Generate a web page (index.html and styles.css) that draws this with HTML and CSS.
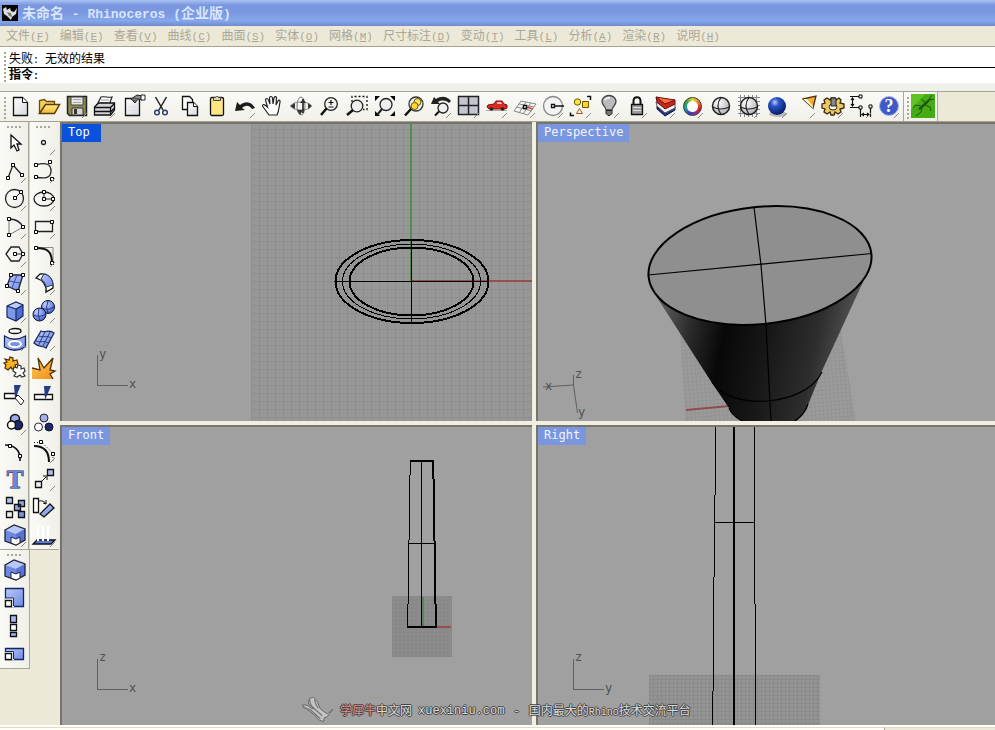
FILE: index.html
```html
<!DOCTYPE html>
<html lang="zh-CN">
<head>
<meta charset="utf-8">
<title>未命名 - Rhinoceros (企业版)</title>
<link rel="stylesheet" href="styles.css">
</head>
<body>
<svg class="defs" aria-hidden="true">
  <defs>
    <linearGradient id="blue" x1="0" y1="0" x2="1" y2="1"><stop offset="0" stop-color="#b9c8f6"/><stop offset="1" stop-color="#6f8be4"/></linearGradient>
    <linearGradient id="paper" x1="0" y1="0" x2="1" y2="1"><stop offset="0" stop-color="#fff"/><stop offset="1" stop-color="#d4d6da"/></linearGradient>
    <linearGradient id="gold" x1="0" y1="0" x2="0" y2="1"><stop offset="0" stop-color="#ffe98a"/><stop offset="1" stop-color="#f2b832"/></linearGradient>
    <linearGradient id="orange" x1="0" y1="0" x2="1" y2="1"><stop offset="0" stop-color="#ffd060"/><stop offset="1" stop-color="#f08a10"/></linearGradient>
    <radialGradient id="ball" cx=".35" cy=".3" r=".8"><stop offset="0" stop-color="#fff"/><stop offset="1" stop-color="#a9abae"/></radialGradient>
    <radialGradient id="blueball" cx=".35" cy=".3" r=".7"><stop offset="0" stop-color="#c9d5ff"/><stop offset="1" stop-color="#4767cf"/></radialGradient>
    <radialGradient id="deepball" cx=".38" cy=".3" r=".75"><stop offset="0" stop-color="#b8d0ff"/><stop offset=".3" stop-color="#2c55c8"/><stop offset="1" stop-color="#04165e"/></radialGradient>
    <linearGradient id="cone" x1="660" y1="340" x2="860" y2="380" gradientUnits="userSpaceOnUse"><stop offset="0" stop-color="#555"/><stop offset=".14" stop-color="#292929"/><stop offset=".3" stop-color="#080808"/><stop offset=".5" stop-color="#161616"/><stop offset=".75" stop-color="#2d2d2d"/><stop offset="1" stop-color="#646464"/></linearGradient>
    <pattern id="grid8" x="251" y="121" width="8" height="8" patternUnits="userSpaceOnUse"><path d="M.5 0V8M0 .5H8" stroke="#8e8e8e" stroke-width="1"/></pattern>
    <pattern id="grid4" x="649" y="675" width="4" height="4" patternUnits="userSpaceOnUse"><path d="M.5 0V4M0 .5H4" stroke="#8a8a8a"/></pattern>
    <pattern id="grid3" x="392" y="596" width="4" height="4" patternUnits="userSpaceOnUse"><path d="M2 2h1v1H2z" fill="#9a9a9a"/></pattern>
    <pattern id="gridp" width="4" height="4" patternUnits="userSpaceOnUse" patternTransform="rotate(-5)"><path d="M.5 0V4M0 .5H4" stroke="#8c8c8c"/></pattern>
    <g id="node"><path d="M-1.500-1.500h3v3h-3z" fill="#fff" stroke="#000"/></g>
    <g id="cutbox"><path d="M2 7l9-5 11 4v11l-9 5-11-4z" fill="#6c89e4"/><path d="M2 7l9-5 11 4-9 5z" fill="#b9c8f6"/><path d="M13 11l9-5v11l-9 5z" fill="#5775d6"/><path d="M2 7l9-5 11 4v11l-9 5-11-4z" fill="none" stroke="#223" stroke-width="1.300"/><path d="M8 14l5 2 4-2v6l-4 2-5-2z" fill="#fff" stroke="#223"/></g>
    <g id="wiresphere"><circle cx="13" cy="12" r="8.500" fill="url(#ball)" stroke="#222" stroke-width="1.500"/><path d="M4.500 13q8 4 17 0M13 3.500q-6 8 0 17" fill="none" stroke="#222" stroke-width="1.200"/></g>
  </defs>
</svg>

<header class="titlebar">
  <svg class="appicon" viewBox="0 0 16 16"><path fill="#050505" d="M0 0h16v16H0z"/><path fill="#ddd" d="M1 4l3-2 1 3 3-2 1 3 3 1 3-4-1 6-4 3-1 3-4-4-3-2z"/><path fill="#777" d="M5 7l4 1 1 4-3-1z"/></svg>
  <h1>未命名<span class="latin"> - Rhinoceros (</span>企业版<span class="latin">)</span></h1>
</header>

<nav class="menubar">
  <button>文件<span>(<u>F</u>)</span></button><button>编辑<span>(<u>E</u>)</span></button><button>查看<span>(<u>V</u>)</span></button><button>曲线<span>(<u>C</u>)</span></button><button>曲面<span>(<u>S</u>)</span></button><button>实体<span>(<u>O</u>)</span></button><button>网格<span>(<u>M</u>)</span></button><button>尺寸标注<span>(<u>D</u>)</span></button><button>变动<span>(<u>T</u>)</span></button><button>工具<span>(<u>L</u>)</span></button><button>分析<span>(<u>A</u>)</span></button><button>渲染<span>(<u>R</u>)</span></button><button>说明<span>(<u>H</u>)</span></button>
</nav>

<section class="command">
  <i class="grip tall"></i>
  <div class="command-lines">
    <output class="history">失败<span>: </span>无效的结果</output>
    <div class="prompt"><label for="cmd">指令<span>:</span></label><input id="cmd" type="text" autocomplete="off"></div>
  </div>
</section>

<div class="toolbar">
  <div class="band">
    <i class="grip tall"></i>
    <button aria-label="New"><svg viewBox="0 0 24 24"><path d="M5.500 3.500h9l5 5v13h-14z" fill="url(#paper)" stroke="#111" stroke-width="1.300"/><path d="M14.500 3.500v5h5" fill="#fff" stroke="#111"/></svg></button>
    <button aria-label="Open"><svg viewBox="0 0 24 24"><path d="M3.500 19.500V6.500l5-1 2 2h8v3" fill="#f3cf5c" stroke="#6b4c0c" stroke-width="1.300"/><path d="M3.500 19.500l6-9h14l-5 9z" fill="url(#gold)" stroke="#5b3c08" stroke-width="1.500"/></svg></button>
    <button class="fly" aria-label="Save"><svg viewBox="0 0 24 24"><path d="M3.500 2.500h19v19h-17l-2-2z" fill="#8c894d" stroke="#222" stroke-width="1.500"/><path d="M7 3h12v8H7z" fill="#e6e6e6" stroke="#444"/><path d="M9 5.500h8M9 8.500h8" stroke="#aaa"/><path d="M8 14h11v7H8z" fill="#d5d5d5" stroke="#333"/><path d="M10 15h3v5h-3z" fill="#333"/></svg></button>
    <button class="fly" aria-label="Print"><svg viewBox="0 0 24 24"><path d="M9 3c4-1 7 1 11 0l-3 8H5z" fill="#fff" stroke="#222" stroke-width="1.200"/><path d="M9 6h8M8 8.500h8" stroke="#999"/><path d="M2.500 13l4-4h16v7l-4 5h-16z" fill="#d2d3d6" stroke="#111" stroke-width="1.300"/><path d="M2.500 13.500h16l4-4M3 17.500h16l3-3M18.500 13v8" fill="none" stroke="#111" stroke-width="1.300"/></svg></button>
    <button aria-label="Properties"><svg viewBox="0 0 24 24"><path d="M5.500 4.500h14v17h-14z" fill="url(#paper)" stroke="#111" stroke-width="1.300"/><path d="M8 13h9M8 16h9" stroke="#ddd"/><path d="M11 5l6-4 5 1v4l-4-1-3 4z" fill="#888" stroke="#222"/><path d="M21 1h4v5h-4z" fill="#fff" stroke="#222"/><path d="M13 4l5 1M12 6l4 1" stroke="#444"/></svg></button>
    <button aria-label="Cut"><svg viewBox="0 0 24 24"><path d="M7.500 3l7.500 13M18.500 3L11 16" stroke="#222" stroke-width="1.500"/><circle cx="9" cy="18.500" r="2.300" fill="none" stroke="#2c3f6c" stroke-width="1.500"/><circle cx="17" cy="18.500" r="2.300" fill="none" stroke="#2c3f6c" stroke-width="1.500"/></svg></button>
    <button aria-label="Copy"><svg viewBox="0 0 24 24"><path d="M6.500 2.500h7l3 3v10h-10z" fill="#fff" stroke="#111" stroke-width="1.300"/><path d="M11.500 8.500h6l4 4v9h-10z" fill="url(#paper)" stroke="#111" stroke-width="1.300"/><path d="M17.500 8.500v4h4" fill="#fff" stroke="#111"/></svg></button>
    <button aria-label="Paste"><svg viewBox="0 0 24 24"><rect x="6.500" y="3.500" width="13" height="18" rx="1.500" fill="#ffe682" stroke="#111" stroke-width="1.300"/><path d="M9.500 6.500v-3h2l1-1h1l1 1h2v3z" fill="#ded3a2" stroke="#444"/></svg></button>
    <button class="fly" aria-label="Undo"><svg viewBox="0 0 24 24"><path d="M3 17l2-9 3 3c6-5 12-3 15 3l-3 1c-3-4-6-4-10-1l3 2z" fill="#1c1c1c"/></svg></button>
    <button aria-label="Pan"><svg viewBox="0 0 24 24"><path d="M9 21C6 17 4 14 2.500 12c0-2 2-2 5 1L5.500 6c0-2 2-2 3 0l1.500 4-.5-6c0-2 2.500-2 3 0l.5 6 1-6c.5-2 2.500-1.500 2.500 0l-.5 7 2-4c1-1.500 2.500-.5 2 1-1 5-1 9-3 13z" fill="#fff" stroke="#222" stroke-width="1.200"/></svg></button>
    <button aria-label="Rotate view"><svg viewBox="0 0 24 24"><ellipse cx="13" cy="12" rx="10" ry="4" fill="none" stroke="#888"/><ellipse cx="13" cy="12" rx="4" ry="9" fill="none" stroke="#777"/><path d="M15 5v14" stroke="#111" stroke-width="1.500"/><path d="M7 9l-5 3 5 3zM20 9l4 3-4 3zM12 9l3-4 3 4zM9 16h6l-3 5z" fill="#333"/></svg></button>
    <button aria-label="Zoom"><svg viewBox="0 0 24 24"><circle cx="15" cy="10" r="6.300" fill="#f4f4f4" stroke="#222" stroke-width="1.300"/><path d="M10.500 14.500L5 21" stroke="#111" stroke-width="2.500"/><path d="M12.500 8.500h5M15 6v5M12.500 13h5" stroke="#111" stroke-width="1.200"/></svg></button>
    <button aria-label="Zoom window"><svg viewBox="0 0 24 24"><path d="M8 8V2.500h15v13h-4" fill="none" stroke="#111" stroke-dasharray="2 2" stroke-width="1.300"/><circle cx="13" cy="12" r="5.800" fill="#eee" stroke="#222" stroke-width="1.300"/><path d="M9 16l-6 5" stroke="#111" stroke-width="2.500"/></svg></button>
    <button aria-label="Zoom extents"><svg viewBox="0 0 24 24"><path d="M3 2h5L3 7zM23 2h-5l5 5zM3 22h5l-5-5zM23 22h-5l5-5z"/><circle cx="14" cy="10.500" r="6" fill="#eee" stroke="#222" stroke-width="1.300"/><path d="M10 15l-5 6" stroke="#222" stroke-width="2"/></svg></button>
    <button aria-label="Zoom selected"><svg viewBox="0 0 24 24"><circle cx="16" cy="10" r="7" fill="#eee" stroke="#333" stroke-width="1.300"/><circle cx="17.500" cy="8" r="3.500" fill="#ffe04e" stroke="#645418"/><circle cx="14.500" cy="12" r="3.500" fill="#ffd92e" stroke="#645418"/><path d="M11 15l-6 6.500" stroke="#111" stroke-width="2.500"/></svg></button>
    <button class="fly" aria-label="Undo view"><svg viewBox="0 0 24 24"><path d="M3 10l3-7 2 2c6-4 12-2 15 2l-2 2c-4-3-7-3-11-1l2 2z" fill="#222"/><circle cx="15" cy="14" r="5" fill="#eee" stroke="#222" stroke-width="1.300"/><path d="M11 17.500l-4 4" stroke="#111" stroke-width="2"/></svg></button>
    <button class="fly" aria-label="Four viewports"><svg viewBox="0 0 24 24"><path d="M2.500 2.500h20v18h-20z" fill="#c3c5d0" stroke="#222" stroke-width="1.500"/><path d="M12.500 2v19M2 11.500h21" stroke="#222" stroke-width="1.500"/></svg></button>
    <button class="fly" aria-label="Named view"><svg viewBox="0 0 24 24"><path d="M2 16.500h21" stroke="#aaa"/><path d="M3 13l1-2 6-1 2-3h6l2 3 3 1v3l-2 1H5z" fill="#d92b25" stroke="#7d0f0c"/><path d="M13 10V8h4l1 2z" fill="#fbb"/><circle cx="7.500" cy="15" r="1.800" fill="#222"/><circle cx="18.500" cy="15" r="1.800" fill="#222"/></svg></button>
    <button class="fly" aria-label="Set CPlane"><svg viewBox="0 0 24 24"><path d="M9 7l15 3M7 10l15 3M5 13l15 4M2 17l14 4M9 7L2 17M14 8L7 19M19 9l-8 11M24 10l-8 11" stroke="#888" fill="none"/><path d="M14 13l7 2" stroke="#c44" stroke-width="1.500"/><path d="M11.500 11.500h3v3h-3z" fill="#fff" stroke="#111" stroke-width="1.300"/></svg></button>
    <button class="fly" aria-label="Object snap"><svg viewBox="0 0 24 24"><circle cx="13" cy="12" r="9.500" fill="#f3f3f3" stroke="#888" stroke-width="1.300"/><path d="M13 12h11" stroke="#111" stroke-width="1.500"/><path d="M11.500 10.500h3v3h-3z" fill="#fff" stroke="#111" stroke-width="1.300"/></svg></button>
    <button class="fly" aria-label="Select"><svg viewBox="0 0 24 24"><circle cx="9.500" cy="8" r="3.200" fill="#ffe03c" stroke="#6d5600"/><path d="M14.500 7.500h6v6h-6z" fill="#ffd529" stroke="#6d5600"/><path d="M11.500 14.500l3 5h-6z" fill="#fff3e0" stroke="#a05a20"/><path d="M19 2.500h3.500V6M2.500 18.500v3H6" fill="none" stroke="#111" stroke-width="1.500"/></svg></button>
    <button class="fly" aria-label="Hide"><svg viewBox="0 0 24 24"><path d="M10 16c0-3-4-5-4-8.500a7 6 0 0 1 14 0c0 3.500-4 5.500-4 8.500z" fill="#b9bbbe" stroke="#444" stroke-width="1.300"/><path d="M9 6q2-3 5-2" stroke="#fff" fill="none" stroke-width="1.500"/><path d="M10 16.500h6v3l-2 2h-2l-2-2z" fill="#777" stroke="#222"/></svg></button>
    <button class="fly" aria-label="Lock"><svg viewBox="0 0 24 24"><path d="M9.500 11V7c0-5 7-5 7 0v4" fill="none" stroke="#111" stroke-width="2"/><path d="M7.500 10.500h11v10h-11z" fill="#9a9b9d" stroke="#111" stroke-width="1.300"/><path d="M9 13.500h8M9 16.500h8" stroke="#ddd"/></svg></button>
    <button class="fly" aria-label="Layers"><svg viewBox="0 0 24 24"><path d="M5 12l8 6 10-5v3l-10 6-8-7z" fill="#26347e" stroke="#101540"/><path d="M4 8l9 6 10-4v4l-10 5-8-7z" fill="#f5f5f5" stroke="#556"/><path d="M4 3l9 6 10-3v4l-10 5-8-7z" fill="#c8261a" stroke="#611"/><path d="M4 3l19 3-10 4z" fill="#ff6e3a" stroke="#611"/></svg></button>
    <button class="fly" aria-label="Object colour"><i class="wheel"></i></button>
    <button aria-label="Shade"><svg viewBox="0 0 24 24"><use href="#wiresphere"/></svg></button>
    <button class="fly" aria-label="Shade with grid"><svg viewBox="0 0 24 24"><path d="M4.500 1v22M8.500 1v22M12.500 1v22M16.500 1v22M20.500 1v22M2 3.500h22M2 7.500h22M2 11.500h22M2 15.500h22M2 19.500h22" stroke="#888"/><use href="#wiresphere"/></svg></button>
    <button class="fly" aria-label="Render"><svg viewBox="0 0 24 24"><ellipse cx="14" cy="20" rx="9" ry="3" fill="#bbb"/><circle cx="13" cy="12" r="9" fill="url(#deepball)"/></svg></button>
    <button class="fly" aria-label="Spotlight"><svg viewBox="0 0 24 24"><path d="M11 5l13-3-3 12z" fill="url(#orange)" stroke="#4b3410" stroke-width="1.300"/><path d="M11 5l4 0 6 7v2z" fill="#fff1c4"/></svg></button>
    <button class="fly" aria-label="Options"><svg viewBox="0 0 24 24"><path d="M11 4h4l1 2 3-2 2 2-1 3 4 1v4l-4 1 1 3-3 2-3-2-1 3h-3l-1-3-3 2-3-2 1-3-3-1v-4l3-1-1-3 3-2 3 2z" fill="#ecc867" stroke="#38280a" stroke-width="1.300"/><ellipse cx="13" cy="13" rx="4" ry="3" fill="#fff" stroke="#38280a"/><path d="M11 4h5v8h-5z" fill="#888" stroke="#222"/></svg></button>
    <button class="fly" aria-label="Dimensions"><svg viewBox="0 0 24 24"><path d="M2 2.500h9M2 13.500h9M4.500 4v8M3 6l1.500-2L6 6M3 10l1.500 2L6 10M12.500 15v8M22.500 14v9M14 20.500h7M16 19l-2 1.500L16 22M19 19l2 1.500-2 1.500" fill="none" stroke="#111" stroke-width="1.200"/><use href="#node" x="12.500" y="2.500"/><use href="#node" x="12.500" y="13.500"/><use href="#node" x="22.500" y="12.500"/></svg></button>
    <button class="fly" aria-label="Help"><svg viewBox="0 0 24 24"><circle cx="13" cy="12" r="9.500" fill="#3d5ac6" stroke="#a9b7e8"/><text class="qmark" x="13" y="18" text-anchor="middle">?</text></svg></button>
  </div>
  <div class="band plugin">
    <i class="grip tall"></i>
    <button aria-label="Grasshopper"><svg viewBox="0 0 24 24"><path fill="#46ac13" d="M0 0h24v24H0z"/><path fill="#62c224" d="M0 0h14L0 16z"/><path d="M7 15l7-7 5-4 1 1-4 5-7 6z" fill="#1c560f"/><path d="M10 12L4 11l-2 3M14 8l-4-3M14 11l5 2 1 4M11 14l-1 4-5 4M18 5l3-4M19 6l4-1" stroke="#1c560f" fill="none"/></svg></button>
  </div>
</div>

<main class="workspace">
  <aside class="side">
    <div class="palette">
      <i class="grip wide"></i><i class="grip wide"></i>
      <button aria-label="Pointer"><svg viewBox="0 0 24 24"><path d="M8 4v13l3-3 3 6 2-1-2-6h4z" fill="#fff" stroke="#111" stroke-width="1.300"/></svg></button>
      <button class="fly" aria-label="Point"><svg viewBox="0 0 24 24"><circle cx="11.500" cy="11.500" r="2" fill="#fff" stroke="#222" stroke-width="1.300"/></svg></button>
      <button class="fly" aria-label="Polyline"><svg viewBox="0 0 24 24"><path d="M5 19l5-13 9 10" fill="none" stroke="#222" stroke-width="1.300"/><use href="#node" x="5" y="19"/><use href="#node" x="10" y="6"/><use href="#node" x="19" y="16"/></svg></button>
      <button class="fly" aria-label="Curve"><svg viewBox="0 0 24 24"><path d="M4 6c10-3 15-1 15 6s-6 8-15 6" fill="none" stroke="#222" stroke-width="1.300"/><use href="#node" x="4" y="6"/><use href="#node" x="18" y="3"/><use href="#node" x="4" y="18"/><use href="#node" x="20" y="20"/></svg></button>
      <button class="fly" aria-label="Circle"><svg viewBox="0 0 24 24"><circle cx="11.500" cy="11.500" r="9" fill="none" stroke="#222" stroke-width="1.300"/><path d="M12 11l6-6" stroke="#222"/><use href="#node" x="12" y="11"/><use href="#node" x="18" y="5"/></svg></button>
      <button class="fly" aria-label="Ellipse"><svg viewBox="0 0 24 24"><ellipse cx="12" cy="12" rx="10" ry="7" fill="none" stroke="#222" stroke-width="1.300"/><path d="M12 5v7h9" fill="none" stroke="#222"/><use href="#node" x="12" y="5"/><use href="#node" x="12" y="12"/><use href="#node" x="21" y="12"/></svg></button>
      <button class="fly" aria-label="Arc"><svg viewBox="0 0 24 24"><path d="M6 4v16l14-8" fill="none" stroke="#777"/><path d="M6 4q10 0 14 8" fill="none" stroke="#222" stroke-width="1.300"/><use href="#node" x="6" y="4"/><use href="#node" x="20" y="12"/><use href="#node" x="6" y="20"/></svg></button>
      <button class="fly" aria-label="Rectangle"><svg viewBox="0 0 24 24"><path d="M3.500 6.500h17v10h-17z" fill="none" stroke="#222" stroke-width="1.300"/><use href="#node" x="20" y="7"/><use href="#node" x="4" y="17"/></svg></button>
      <button class="fly" aria-label="Polygon"><svg viewBox="0 0 24 24"><path d="M3 11l5-7h8l4 7-4 7H8z" fill="none" stroke="#222" stroke-width="1.300"/><path d="M12 11h8" stroke="#222"/><use href="#node" x="12" y="11"/><use href="#node" x="20" y="11"/></svg></button>
      <button class="fly" aria-label="Fillet"><svg viewBox="0 0 24 24"><path d="M4 4.500h17V20" fill="none" stroke="#888"/><path d="M4 5c11 0 16 3 16 15" fill="none" stroke="#111" stroke-width="2"/><use href="#node" x="4" y="5"/><use href="#node" x="20" y="20"/></svg></button>
      <button class="fly" aria-label="Surface"><svg viewBox="0 0 24 24"><path d="M8 4h12l-5 16-11-5z" fill="url(#blue)" stroke="#223" stroke-width="1.300"/><path d="M6 10l11 2M14 4L9 17" stroke="#314fae"/><use href="#node" x="8" y="4"/><use href="#node" x="20" y="4"/><use href="#node" x="15" y="20"/><use href="#node" x="4" y="15"/></svg></button>
      <button class="fly" aria-label="Revolve"><svg viewBox="0 0 24 24"><path d="M4 7l4-4c7-1 12 3 13 11v3l-7 4c1-6-3-12-10-14z" fill="#fff" stroke="#111" stroke-width="1.300"/><path d="M12 3c5 1 9 5 9 11l-7 2c0-3-2-6-5-8z" fill="url(#blue)" stroke="#26366f"/></svg></button>
      <button class="fly" aria-label="Box"><svg viewBox="0 0 24 24"><path d="M4 7l9-4 7 3v11l-7 5-9-4z" fill="#7d98ea"/><path d="M4 7l9-4 7 3-7 4z" fill="#c0cdf8"/><path d="M13 10l7-4v11l-7 5z" fill="#4d6bd0"/><path d="M4 7l9-4 7 3v11l-7 5-9-4zM4 7l9 3 7-4M13 10v12" fill="none" stroke="#182a66" stroke-width="1.200"/></svg></button>
      <button class="fly" aria-label="Boolean"><svg viewBox="0 0 24 24"><circle cx="16" cy="8" r="6.500" fill="url(#blueball)" stroke="#112"/><circle cx="7.500" cy="15.500" r="6.500" fill="url(#blueball)" stroke="#112"/><path d="M10 9q6 3 12-1M16 2q-3 6 0 12M1 16q7 3 13-1M7 9q-2 6 1 13" fill="none" stroke="#22398d"/></svg></button>
      <button class="fly" aria-label="Project"><svg viewBox="0 0 24 24"><ellipse cx="12" cy="4" rx="6" ry="2.500" fill="#fff" stroke="#111" stroke-width="1.300"/><path d="M1.500 9c6 4 14 4 21 0v11c-7 4-15 4-21 0z" fill="url(#blue)" stroke="#152763" stroke-width="1.300"/><ellipse cx="12" cy="17" rx="6" ry="3" fill="#7b92e4" stroke="#fff" stroke-width="2"/></svg></button>
      <button class="fly" aria-label="Mesh"><svg viewBox="0 0 24 24"><path d="M9 4c5 2 8-2 13 2l-8 15c-4-3-7 0-12-5z" fill="url(#blue)" stroke="#1c2a60" stroke-width="1.300"/><path d="M7 9c5 2 8-1 12 2M4 14c5 2 8-1 12 2M13 5L6 19M18 5l-7 14" fill="none" stroke="#26397e"/></svg></button>
      <button aria-label="Group"><svg viewBox="0 0 24 24"><path d="M2 4l4 1 1-3 3 1v3l4-1 1 4-3 1 1 3-4 1-1-2-3 3-3-2 1-3-2-2 3-1z" fill="#ffb11f" stroke="#432d06" stroke-width="1.200"/><path d="M11 12l3 1 1-3 3 1 0 3 3-1 1 3-2 2 2 3-3 1-2-2-3 2-3-1 2-3-3-2z" fill="#fff" stroke="#333" stroke-width="1.200"/></svg></button>
      <button aria-label="Explode"><svg viewBox="0 0 24 24"><path d="M0 24V13l8 2-2-12 6 10 9-10-3 12 5 1-5 3 3 5z" fill="url(#orange)"/><path d="M0 13l8 2-2-12 6 10 9-10-3 12 5 1-5 3 3 5" fill="none" stroke="#503004" stroke-width="1.300"/></svg></button>
      <button aria-label="Trim"><svg viewBox="0 0 24 24"><path d="M1.500 10.500h12v5h-12z" fill="#fff" stroke="#111" stroke-width="1.300"/><path d="M12 15l3-3 6 6-3 4z" fill="#fff" stroke="#222"/><path d="M11 2h7l-6 14z" fill="#263c88"/></svg></button>
      <button aria-label="Split"><svg viewBox="0 0 24 24"><path d="M2.500 11.500h18v5h-18z" fill="#fff" stroke="#111" stroke-width="1.300"/><path d="M12 3h7l-6 14z" fill="#263c88"/></svg></button>
      <button class="fly" aria-label="Join"><svg viewBox="0 0 24 24"><circle cx="12" cy="8" r="4.500" fill="#9daaeb" stroke="#111" stroke-width="1.500"/><circle cx="15" cy="14" r="4.500" fill="#1c276f" stroke="#111" stroke-width="1.500"/><circle cx="8.500" cy="14" r="4" fill="#fff" stroke="#111" stroke-width="1.500"/></svg></button>
      <button aria-label="Ungroup"><svg viewBox="0 0 24 24"><circle cx="12" cy="7" r="4" fill="#a4afe8" stroke="#223"/><circle cx="6.500" cy="16" r="4" fill="#fff" stroke="#223"/><circle cx="17" cy="16" r="4" fill="#1c276f" stroke="#112"/></svg></button>
      <button aria-label="Point edit"><svg viewBox="0 0 24 24"><path d="M2 6c9 0 16 5 15 16" fill="none" stroke="#111" stroke-width="1.600"/><use href="#node" x="7" y="7"/><use href="#node" x="17" y="17"/></svg></button>
      <button class="fly" aria-label="Control points"><svg viewBox="0 0 24 24"><path d="M2 3.500h8l11 11v7" fill="none" stroke="#111" stroke-dasharray="1 2"/><path d="M2 7c10 0 15 6 15 16" fill="none" stroke="#111" stroke-width="2"/><use href="#node" x="9" y="3"/><use href="#node" x="21" y="15"/></svg></button>
      <button aria-label="Text"><svg viewBox="0 0 24 24"><text class="ticon" x="12" y="21" text-anchor="middle">T</text></svg></button>
      <button class="fly" aria-label="Move"><svg viewBox="0 0 24 24"><path d="M3.500 14.500h6v6h-6z" fill="#eee" stroke="#111" stroke-width="1.300"/><path d="M15.500 2.500h6v6h-6z" fill="#a9b8f2" stroke="#111" stroke-width="1.300"/><path d="M9 15l5-5M11 9h4v4" fill="none" stroke="#111"/></svg></button>
      <button aria-label="Array"><svg viewBox="0 0 24 24"><g stroke="#111" stroke-width="1.300" fill="url(#blue)"><path d="M3.500 2.500h6v6h-6zM15.500 5.500h6v6h-6zM11.500 9.500h6v6h-6zM15.500 16.500h6v6h-6z"/><path d="M3.500 16.500h6v6h-6z" fill="#eee"/></g></svg></button>
      <button aria-label="Rotate"><svg viewBox="0 0 24 24"><path d="M1.500 3.500h5v14h-5z" fill="#fff" stroke="#111" stroke-width="1.300"/><path d="M8 19l10-10 4 4-10 9z" fill="url(#blue)" stroke="#111" stroke-width="1.300"/><path d="M7 6q5-1 7 3M11 8l3 1 0-4" fill="none" stroke="#111"/></svg></button>
      <button class="fly" aria-label="Cap"><svg viewBox="0 0 24 24"><use href="#cutbox"/></svg></button>
      <button class="fly" aria-label="Extrude"><svg viewBox="0 0 24 24"><path d="M5 17h18l-4 4H1z" fill="#5c7ad9" stroke="#111" stroke-width="1.300"/><path d="M6 3v15M11 3v15M16 3v15" stroke="#fff" stroke-width="2"/></svg></button>
    </div>
    <div class="palette narrow">
      <i class="grip wide"></i>
      <button aria-label="Cap holes"><svg viewBox="0 0 24 24"><use href="#cutbox"/></svg></button>
      <button aria-label="Scale"><svg viewBox="0 0 24 24"><path d="M2.500 2.500h18v18h-18z" fill="url(#blue)" stroke="#152763" stroke-width="1.300"/><path d="M2 12h9v9H2z" fill="#fff"/><path d="M10.500 20v-8H2" fill="none" stroke="#152763"/><path d="M2.500 14.500h6v6h-6z" fill="#fff" stroke="#111" stroke-width="1.300"/></svg></button>
      <button aria-label="Align"><svg viewBox="0 0 24 24"><g stroke="#111" stroke-width="1.300" fill="#a9b8f2"><path d="M7.500 1.500h6v7h-6zM7.500 18.500h6v4h-6z"/><path d="M7.500 10.500h6v6h-6z" fill="#fff"/></g></svg></button>
      <button aria-label="Scale 1D"><svg viewBox="0 0 24 24"><path d="M2.500 6.500h18v11h-18z" fill="url(#blue)" stroke="#152763" stroke-width="1.300"/><path d="M2 9h9v9H2z" fill="#fff"/><path d="M10.500 17V9.500H2" fill="none" stroke="#152763"/><path d="M2.500 11.500h6v6h-6z" fill="#fff" stroke="#111" stroke-width="1.300"/></svg></button>
    </div>
  </aside>

  <div class="viewports">
    <section class="view">
      <h2 class="active">Top</h2>
      <svg viewBox="62 124 470 297" preserveAspectRatio="xMidYMid slice" shape-rendering="crispEdges">
        <path d="M251 100h300v340H251" fill="#979797"/><path d="M251 100h300v340H251" fill="url(#grid8)"/>
        <path d="M411 100v181" stroke="#4e914e" stroke-width="2"/><path d="M411 281h140" stroke="#954f4f" stroke-width="2"/>
        <g fill="none" stroke="#000"><ellipse cx="412" cy="281.500" rx="76.500" ry="41.500" stroke-width="2"/><ellipse cx="411.500" cy="281.500" rx="69" ry="37.500"/><ellipse cx="411.500" cy="281.500" rx="62" ry="34" stroke-width="2"/><path d="M336 281.500h153M411.500 240v83"/></g>
        <path d="M97.500 355v30.500h30" fill="none" stroke="#606060"/><text class="axis" x="99" y="358">y</text><text class="axis" x="129" y="388">x</text>
      </svg>
    </section>
    <section class="view">
      <h2>Perspective</h2>
      <svg viewBox="538 124 457 297" preserveAspectRatio="xMidYMid slice">
        <path d="M680 325l6 110h172l-18-110z" fill="#9b9b9b"/><path d="M680 325l6 110h172l-18-110z" fill="url(#gridp)" opacity=".55"/>
        <path d="M686 410l43-4" stroke="#914c4c" stroke-width="2"/>
        <path d="M658 299L712 383l17 25q3 8 15 14h51q10-7 13-17l13-32 42-91z" fill="url(#cone)"/>
        <ellipse cx="760" cy="265.500" rx="112" ry="58.500" transform="rotate(-6 760 265.500)" fill="#8f8f8f" stroke="#000" stroke-width="2"/>
        <path d="M648 275l224-21.500M754 207l7 58 5 60 5 97M712 382c18 29 93 25 110-10M729 408q3 8 15 14M795 421q10-7 13-17" fill="none" stroke="#000" stroke-width="1.200"/>
        <path d="M573.500 375v11M543 387l30-2M573.500 385l4 28" fill="none" stroke="#606060"/><text class="axis" x="575" y="378">z</text><text class="axis" x="545" y="390">x</text><text class="axis" x="578" y="416">y</text>
      </svg>
    </section>
    <section class="view">
      <h2>Front</h2>
      <svg viewBox="62 427 470 298" preserveAspectRatio="xMidYMid slice" shape-rendering="crispEdges">
        <path d="M392 596h60v61h-60z" fill="#898989"/><path d="M392 596h60v61h-60z" fill="url(#grid3)"/>
        <path d="M422.500 597v30" stroke="#58855a" stroke-width="2"/><path d="M436 627h15" stroke="#964f4f" stroke-width="2"/>
        <path d="M410 461h24M433 461v18M434 479v62M435 541v63M436 604v23M407 627h30" fill="none" stroke="#000" stroke-width="2"/><path d="M410.500 461v14M409.500 475v65M408.500 540v64M407.500 604v23M421.500 461v166M408 543.500h28" fill="none" stroke="#000"/>
        <path d="M97.500 659v30.500h30" fill="none" stroke="#606060"/><text class="axis" x="99" y="661">z</text><text class="axis" x="129" y="692">x</text>
      </svg>
    </section>
    <section class="view">
      <h2>Right</h2>
      <svg viewBox="538 427 457 298" preserveAspectRatio="xMidYMid slice" shape-rendering="crispEdges">
        <path d="M649 675h171v60H649z" fill="#949494"/><path d="M649 675h171v60H649z" fill="url(#grid4)"/>
        <path d="M734 420v310" stroke="#000" stroke-width="2"/><path d="M715.500 420v75M714.500 495v82M713.500 577v114M712.500 691v40M754.500 420v184M755.500 604v130M714 522.500h40" fill="none" stroke="#000"/>
        <path d="M573.500 659v30.500h30" fill="none" stroke="#606060"/><text class="axis" x="575" y="661">z</text><text class="axis" x="605" y="692">y</text>
      </svg>
    </section>
    <div class="watermark">
      <svg viewBox="0 0 34 28"><path d="M1 10q6-1 9 3l4 1-6-5c-1-4 1-7 5-7l4 5 3 7 4 3 3 2 6-5-6 8-3 1-1 4-5-2-4-5-7-5z" fill="#c4c4c4" stroke="#666"/><path d="M9 3q-1 6 5 11M14 4q1 6 4 9M2 12l8 3 10 9M14 14l8 7" stroke="#777" fill="none" stroke-width="1.300"/></svg>
      <p><b>学犀牛</b>中文网</p><p class="site">xuexiniu.com</p><p class="dash">-</p><p>国内最大的<span>Rhino</span>技术交流平台</p>
    </div>
  </div>
</main>
<footer class="status"><div></div><div></div></footer>
</body>
</html>
```
FILE: styles.css
```css
* { box-sizing: border-box; }
body {
  margin: 0;
  min-height: 100vh;
  display: flex;
  flex-direction: column;
  overflow: hidden;
  background: #ece9d8;
  font: 12px/16px "Noto Sans CJK SC", sans-serif;
  color: #000;
}
h1, h2, p { margin: 0; font-weight: normal; }
button { padding: 0; border: 0; background: none; font: inherit; color: inherit; }
.defs { position: absolute; width: 0; height: 0; }

.titlebar {
  flex: none;
  display: flex;
  align-items: center;
  gap: 4px;
  height: 26px;
  padding: 0 2px;
  background: linear-gradient(#a9c2f2, #7b96e0 20%, #7b97e0 50%, #84a8ea 80%, #7189cc);
}
.appicon { width: 16px; height: 16px; }
.titlebar h1 { height: 20px; font-size: 14px; line-height: 18px; font-weight: bold; color: #d8e5fb; }
.latin { white-space: pre; font: bold 13px/18px "Liberation Mono", monospace; }

.menubar {
  flex: none;
  display: flex;
  gap: 10px;
  height: 21px;
  padding: 0 6px;
  border-bottom: 1px solid #a5a292;
  color: #aaa797;
  white-space: nowrap;
}
.menubar span { font: 11px/16px "Liberation Mono", monospace; }

.command { flex: none; display: flex; height: 44px; padding: 3px 0 8px 4px; background: linear-gradient(#fff 36px, #f0f0ea 36px); }
.command-lines { flex: 1; }
.history { display: block; height: 18px; padding-left: 1px; line-height: 15px; border-bottom: 1px solid #000; }
.command span { font: 10px/14px "Liberation Mono", monospace; white-space: pre; }
.prompt { display: flex; align-items: center; height: 14px; padding-left: 1px; font-weight: bold; line-height: 14px; }
.prompt span { font-weight: bold; }
.prompt input { flex: 1; height: 14px; padding: 0 4px; border: 0; outline: 0; background: none; font: inherit; }

.grip { display: block; flex: none; }
.grip.tall { width: 4px; background: radial-gradient(circle at 1px 1px, #a9a799 1px, transparent 1px) 0 2px / 4px 4px repeat-y; }
.grip.wide { height: 7px; margin: 0 6px; background: radial-gradient(circle at 1px 1px, #a9a799 1px, transparent 1px) 0 4px / 4px 4px repeat-x; }

.toolbar { flex: none; display: flex; height: 31px; border-top: 1px solid #a5a292; border-bottom: 1px solid #a5a292; }
.band { display: flex; padding-left: 4px; padding-right: 1px; border-right: 1px solid #aaa898; background: linear-gradient(#fafaf7, #f1f0e9); }
.band .grip { width: 2px; height: 24px; margin-top: 3px; }
.plugin { padding-left: 3px; padding-right: 0; }
.toolbar button, .palette button {
  position: relative;
  display: flex;
  align-items: center;
  justify-content: center;
  width: 28px;
  height: 28px;
}
.toolbar svg, .palette svg { width: 24px; height: 24px; overflow: visible; }
.fly::after {
  content: "";
  position: absolute;
  right: 3px;
  bottom: 2px;
  width: 5px;
  height: 5px;
  background: linear-gradient(135deg, transparent 42%, #888 42%, #888 58%, transparent 58%);
}
.wheel {
  width: 19px;
  height: 19px;
  border: 1px solid #333;
  border-radius: 50%;
  background: radial-gradient(circle, #fff 5px, transparent 6px), conic-gradient(#e8e030, #f08030, #d82020, #9a2890, #2848c0, #20a0a0, #30a830, #e8e030);
}
.qmark { font: bold 18px "Liberation Serif", serif; fill: #fff; }
.ticon { font: bold 25px "Liberation Serif", serif; fill: #6b87e0; stroke: #16245a; stroke-width: 1px; paint-order: stroke; }

.workspace { flex: 1; display: flex; min-height: 0; }
.side { flex: none; width: 60px; }
.palette { display: grid; grid-template-columns: 28px 28px; column-gap: 1px; width: 59px; padding-left: 1px; border-bottom: 1px solid #a9a797; background: linear-gradient(90deg, #fafaf7, #f0efe8 28px, #aaa898 28px, #aaa898 29px, #fafaf7 30px, #f0efe8); }
.palette.narrow { grid-template-columns: 28px; width: 30px; border-right: 1px solid #aaa898; background: linear-gradient(90deg, #fafaf7, #f0efe8); }
.narrow .grip.wide { height: 6px; }
.viewports {
  position: relative;
  flex: 1;
  display: grid;
  grid-template-columns: 472fr 459fr;
  grid-template-rows: 299fr 300fr;
  gap: 4px;
  min-width: 0;
  background: #f1efdf;
}
.view { position: relative; min-width: 0; min-height: 0; overflow: hidden; border: solid #77756b; border-width: 2px 0 0 2px; background: #a0a0a0; }
.view > svg { display: block; width: 100%; height: 100%; position: absolute; }
.view h2 {
  position: absolute;
  z-index: 1;
  top: 0;
  left: 0;
  min-width: 39px;
  padding: 0 6px 2px;
  background: #7a96df;
  color: #f0f4ff;
  font: 12px/16px "DejaVu Sans Mono", monospace;
}
.view h2.active { background: #0a52dc; color: #fff; }
.axis { font: 12px "DejaVu Sans Mono", monospace; fill: #505050; }

.watermark {
  position: absolute;
  left: 241px;
  bottom: 2px;
  display: flex;
  align-items: flex-end;
  gap: 6px;
  white-space: nowrap;
  color: #dcdcdc;
  text-shadow: 1px 0 #444, -1px 0 #444, 0 1px #444, 0 -1px #444;
}
.watermark p { padding-bottom: 3px; height: 21px; }
.watermark svg { width: 33px; height: 28px; }
.watermark b { font-weight: normal; color: #dc8d8d; }
.watermark span { font: 10px/16px "Liberation Mono", monospace; }
.watermark .site { font: 12px/18px "Liberation Mono", monospace; }
.watermark .dash { padding: 0 4px; }

.status { flex: none; display: flex; height: 5px; background: #fffff4; padding-top: 2px; }
.status div { flex: 1; border-top: 1px solid #dedbc9; background: #fffef8; }
.status div:first-child { flex: 8; border-right: 1px solid #aaa797; }
.status div:last-child { background: #ece9d8; }
```
